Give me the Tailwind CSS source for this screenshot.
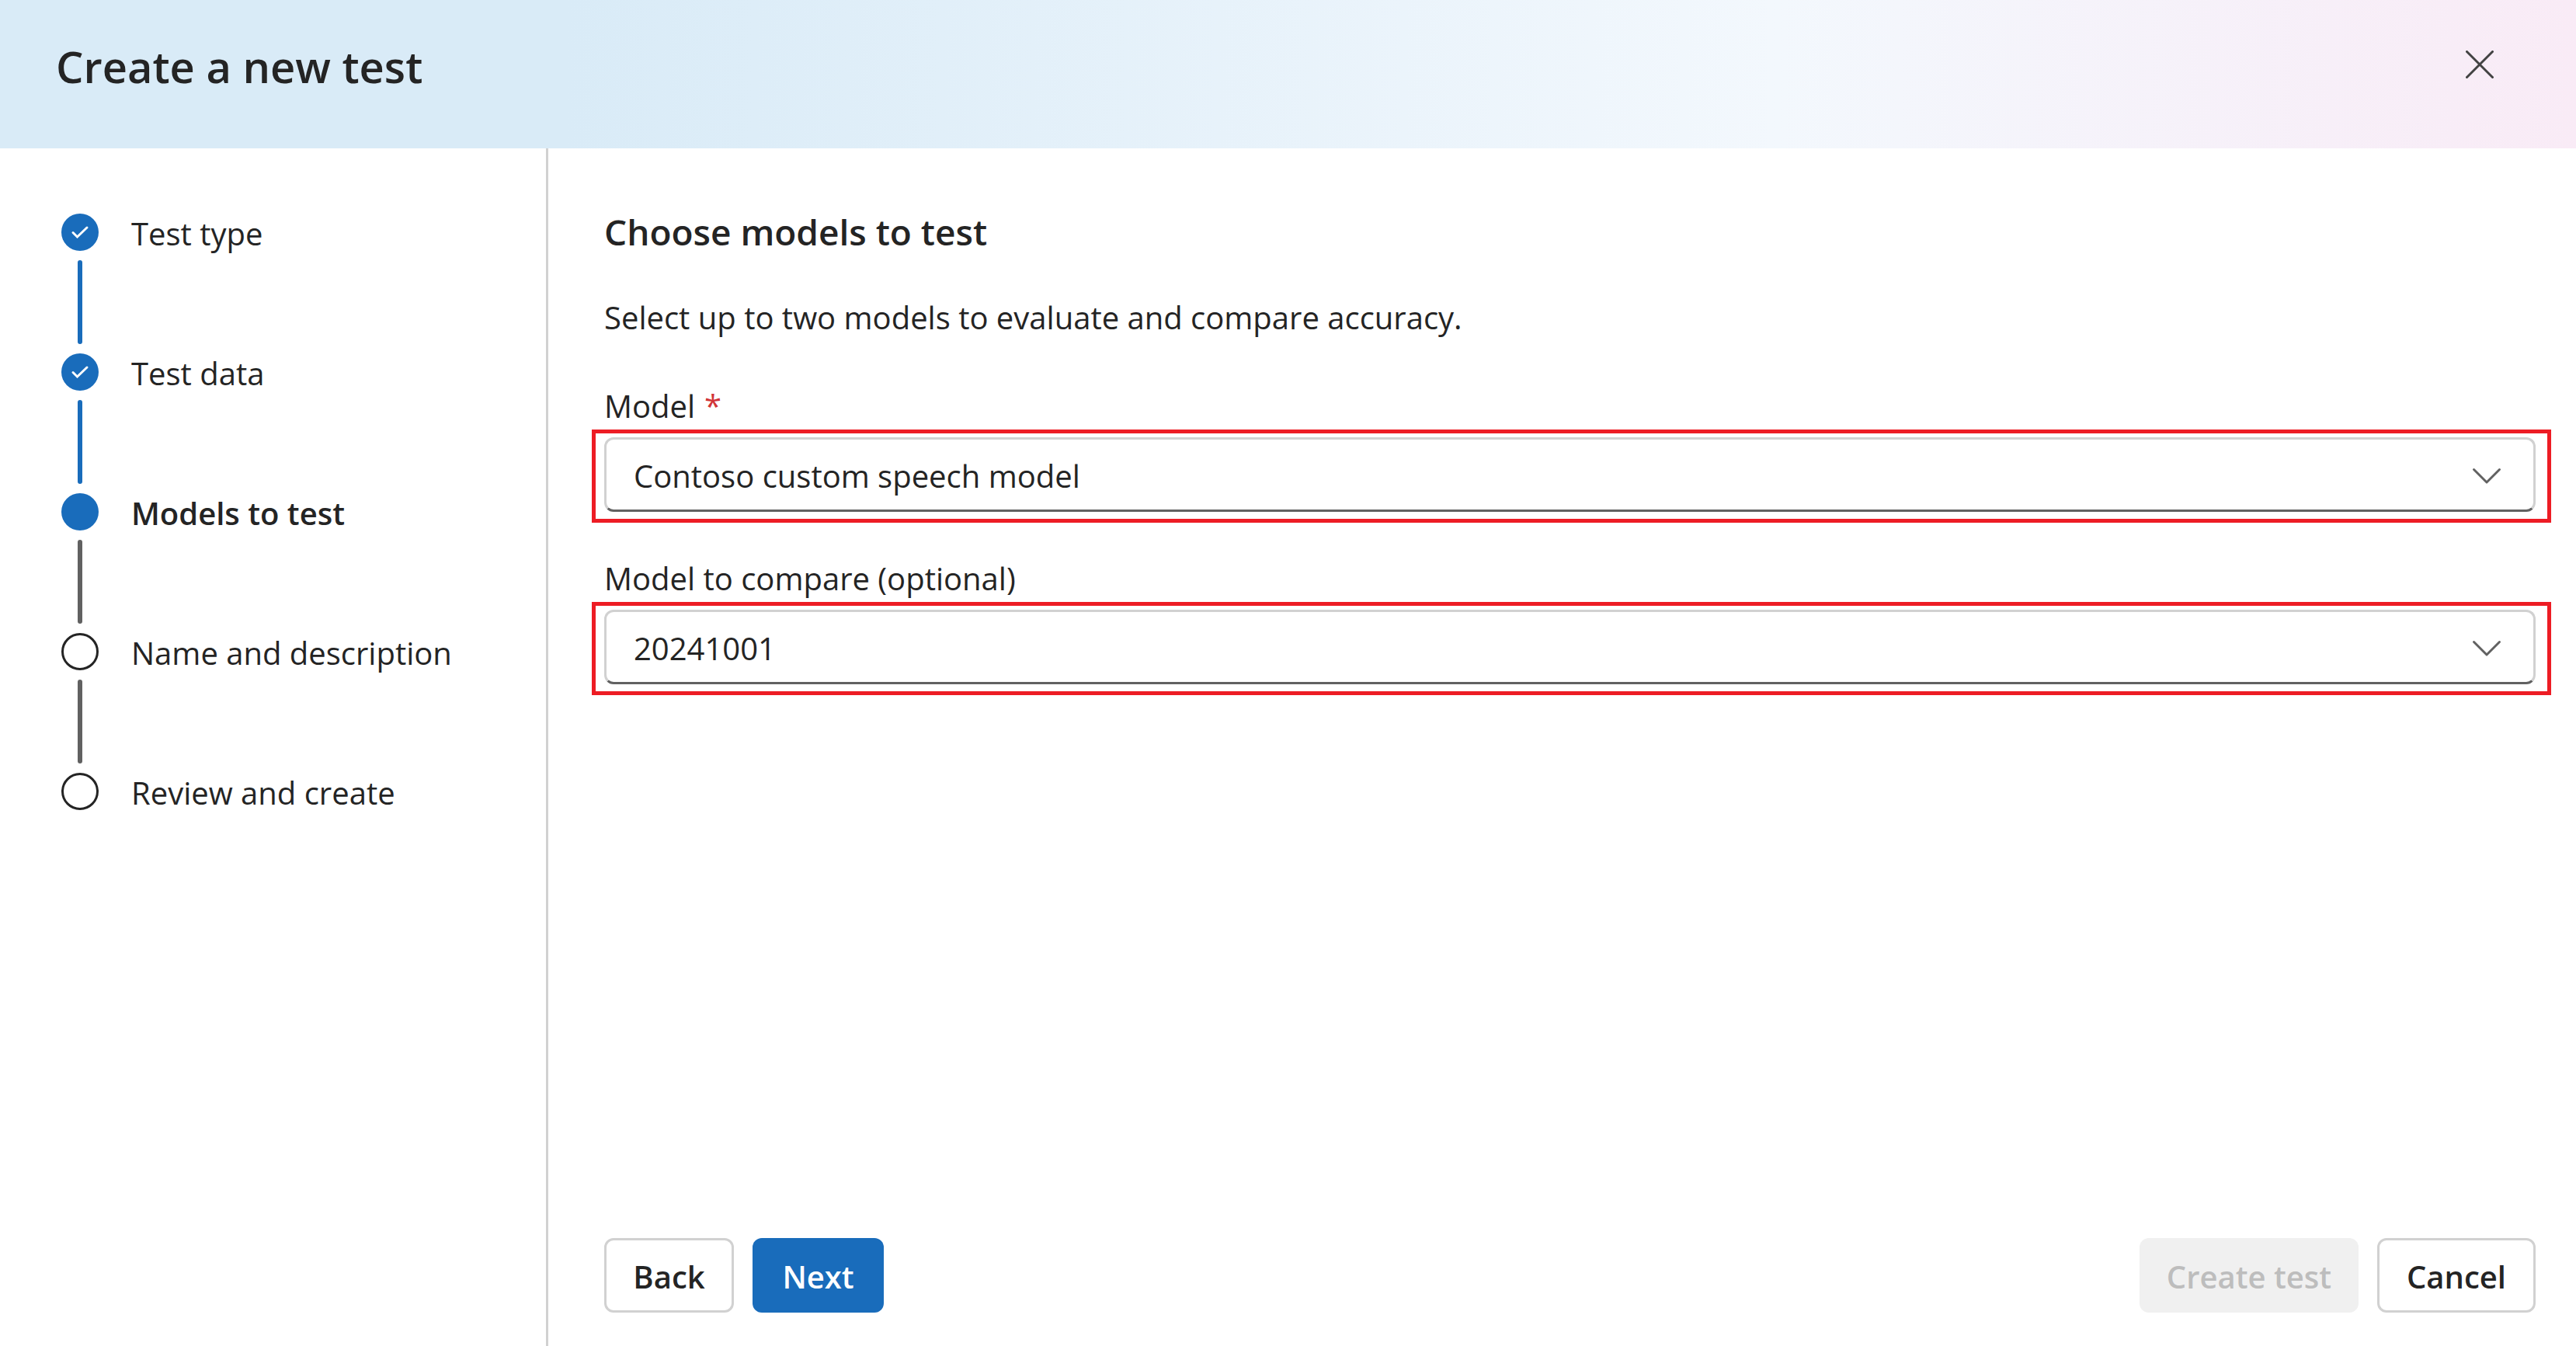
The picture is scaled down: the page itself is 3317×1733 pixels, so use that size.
<!DOCTYPE html>
<html lang="en">
<head>
<meta charset="utf-8">
<meta name="viewport" content="width=device-width, initial-scale=1">
<title>Create a new test</title>
<script src="https://cdn.jsdelivr.net/npm/@tailwindcss/browser@4"></script>
</head>
<body class="flex min-h-screen flex-col bg-white font-['Open_Sans','Noto_Sans',sans-serif] text-[40px] leading-[60px] text-[#242424]">
  <header class="flex h-[191px] items-start justify-between bg-[linear-gradient(90deg,#d9ebf7_0%,#d9ebf7_22%,#f3f8fd_69%,#f9ebf6_100%)] pt-[43px] pr-[84px] pl-[72px]">
    <h1 class="text-[56px] leading-[84px] font-semibold">Create a new test</h1>
    <button type="button" aria-label="Close" class="flex size-20 items-center justify-center text-[#424242]">
      <svg class="size-[36px]" viewBox="0 0 36 36" fill="none" stroke="currentColor" stroke-width="3" stroke-linecap="round"><path d="M1.5 1.5 34.5 34.5M34.5 1.5 1.5 34.5"/></svg>
    </button>
  </header>

  <div class="flex flex-1">
    <nav aria-label="Steps" class="w-[706px] shrink-0 border-r-3 border-[#d1d1d1] pt-[84px] pl-[79px]">
      <ol class="leading-[52px]">
        <li class="flex gap-[42px]">
          <div class="flex flex-col items-center gap-3 pb-3">
            <span class="flex size-12 rounded-full bg-[#196cbb]">
              <svg class="size-12" viewBox="0 0 48 48" fill="none" stroke="#fff" stroke-width="3" stroke-linecap="round" stroke-linejoin="miter"><path d="M15 24.5 20.5 30 33 18"/></svg>
            </span>
            <span class="h-[108px] w-1.5 rounded-full bg-[#196cbb]"></span>
          </div>
          <span>Test type</span>
        </li>
        <li class="flex gap-[42px]">
          <div class="flex flex-col items-center gap-3 pb-3">
            <span class="flex size-12 rounded-full bg-[#196cbb]">
              <svg class="size-12" viewBox="0 0 48 48" fill="none" stroke="#fff" stroke-width="3" stroke-linecap="round" stroke-linejoin="miter"><path d="M15 24.5 20.5 30 33 18"/></svg>
            </span>
            <span class="h-[108px] w-1.5 rounded-full bg-[#196cbb]"></span>
          </div>
          <span>Test data</span>
        </li>
        <li class="flex gap-[42px]" aria-current="step">
          <div class="flex flex-col items-center gap-3 pb-3">
            <span class="size-12 rounded-full bg-[#196cbb]"></span>
            <span class="h-[108px] w-1.5 rounded-full bg-[#616161]"></span>
          </div>
          <span class="font-semibold">Models to test</span>
        </li>
        <li class="flex gap-[42px]">
          <div class="flex flex-col items-center gap-3 pb-3">
            <span class="size-12 rounded-full border-3 border-[#242424]"></span>
            <span class="h-[108px] w-1.5 rounded-full bg-[#616161]"></span>
          </div>
          <span>Name and description</span>
        </li>
        <li class="flex gap-[42px]">
          <span class="size-12 rounded-full border-3 border-[#242424]"></span>
          <span>Review and create</span>
        </li>
      </ol>
    </nav>

    <main class="flex min-w-0 flex-1 flex-col pt-[74px] pr-[52px] pb-[43px] pl-[72px]">
      <h2 class="text-[46px] leading-[66px] font-semibold">Choose models to test</h2>
      <p class="mt-12">Select up to two models to evaluate and compare accuracy.</p>

      <div class="mt-[54px]">
        <label for="model" class="block">Model<span class="pl-3 text-[#d13438]">*</span></label>
        <div class="-mr-5 -ml-4 border-5 border-[#ed1c24] pt-[5px] pr-[15px] pb-[9px] pl-[11px]">
          <div class="relative">
            <select id="model" required class="block h-24 w-full appearance-none rounded-xl border-3 border-[#d1d1d1] border-b-[#616161] bg-white pt-1 pr-32 pl-[35px]">
              <option>Contoso custom speech model</option>
            </select>
            <svg class="pointer-events-none absolute top-[38px] right-[44px] h-6 w-[38px] text-[#616161]" viewBox="0 0 38 24" fill="none" stroke="currentColor" stroke-width="3" stroke-linecap="round" stroke-linejoin="round"><path d="M2.5 3.5 19 20 35.5 3.5"/></svg>
          </div>
        </div>
      </div>

      <div class="mt-[42px]">
        <label for="compare" class="block">Model to compare (optional)</label>
        <div class="-mr-5 -ml-4 border-5 border-[#ed1c24] pt-[5px] pr-[15px] pb-[9px] pl-[11px]">
          <div class="relative">
            <select id="compare" class="block h-24 w-full appearance-none rounded-xl border-3 border-[#d1d1d1] border-b-[#616161] bg-white pt-1 pr-32 pl-[35px]">
              <option>20241001</option>
            </select>
            <svg class="pointer-events-none absolute top-[38px] right-[44px] h-6 w-[38px] text-[#616161]" viewBox="0 0 38 24" fill="none" stroke="currentColor" stroke-width="3" stroke-linecap="round" stroke-linejoin="round"><path d="M2.5 3.5 19 20 35.5 3.5"/></svg>
          </div>
        </div>
      </div>

      <footer class="mt-auto flex gap-6 pt-12 font-semibold">
        <button type="button" class="h-24 min-w-[167px] rounded-xl border-3 border-[#d1d1d1] bg-white pt-1">Back</button>
        <button type="button" class="h-24 min-w-[169px] rounded-xl bg-[#196cbb] pt-1 text-white">Next</button>
        <button type="button" disabled class="ml-auto h-24 min-w-[282px] rounded-xl bg-[#f0f0f0] pt-1 text-[#bdbdbd]">Create test</button>
        <button type="button" class="h-24 min-w-[204px] rounded-xl border-3 border-[#d1d1d1] bg-white pt-1">Cancel</button>
      </footer>
    </main>
  </div>
</body>
</html>
